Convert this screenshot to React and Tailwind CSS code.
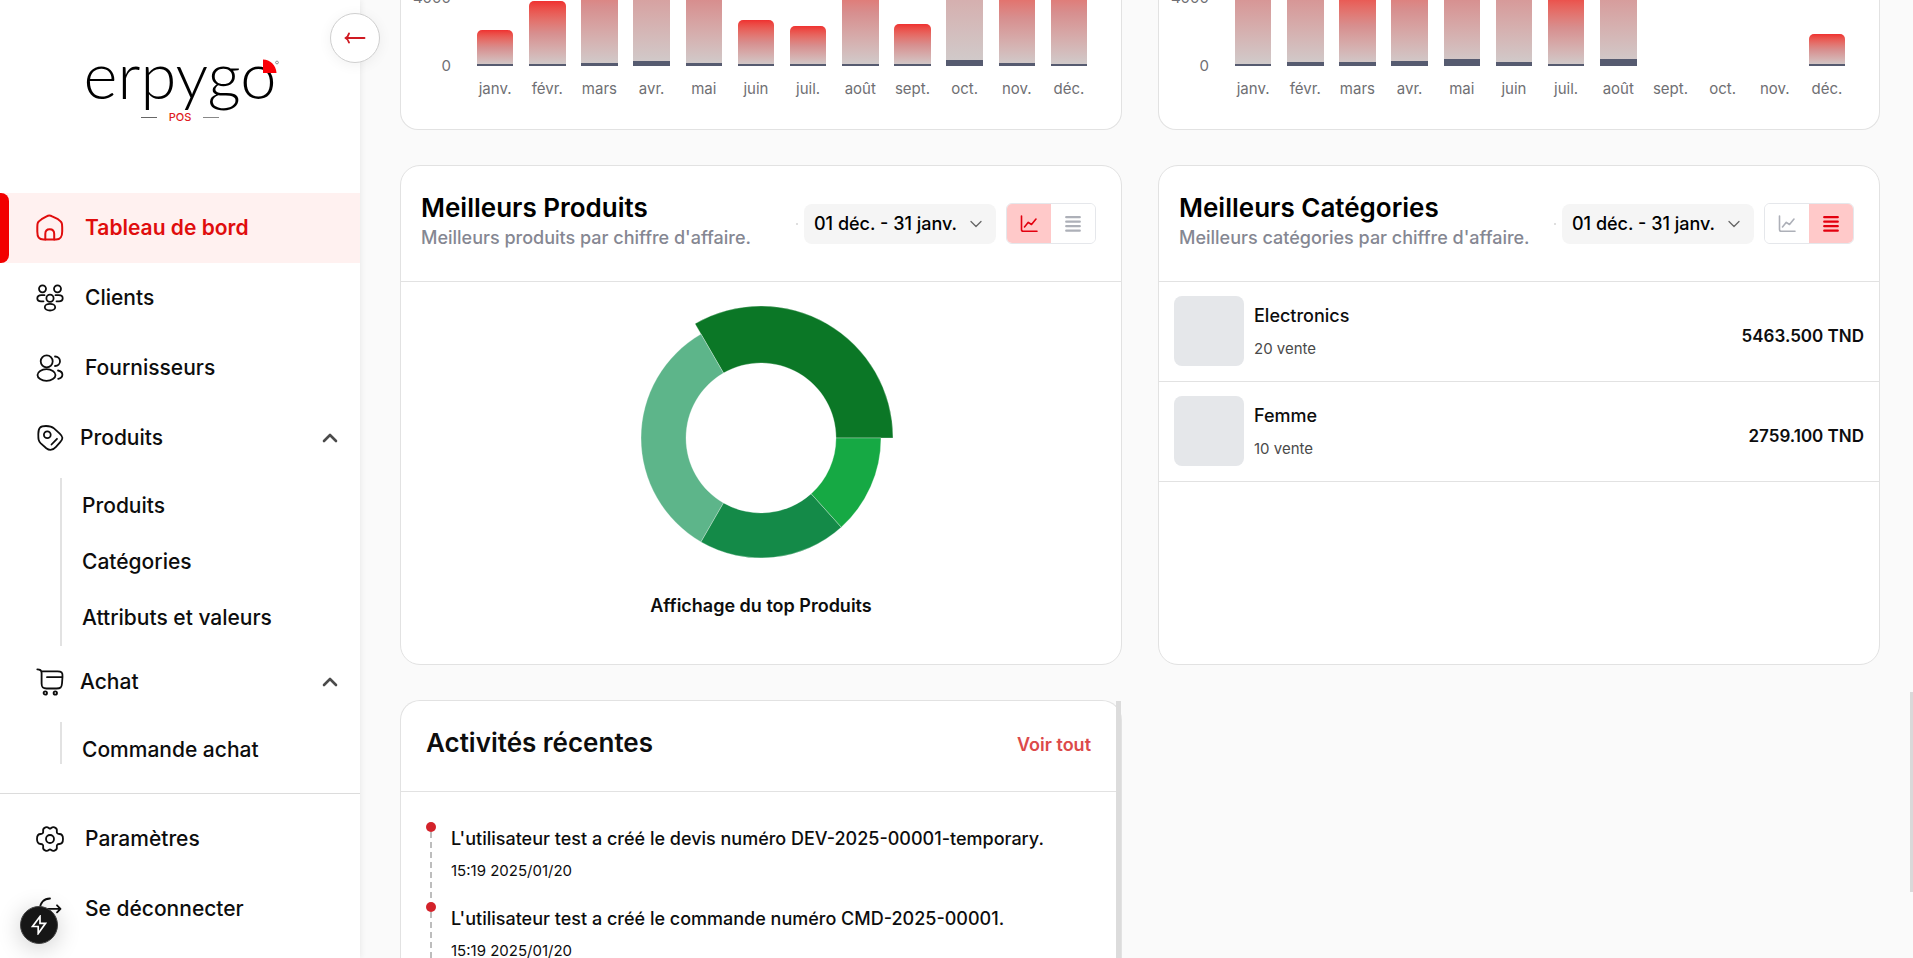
import React from 'react';

const MONTHS = ['janv.', 'févr.', 'mars', 'avr.', 'mai', 'juin', 'juil.', 'août', 'sept.', 'oct.', 'nov.', 'déc.'];

const SALES = [
  [36, 2], [65, 2], [118, 3], [190, 5], [130, 3], [46, 2], [40, 2], [106, 2], [42, 2], [280, 6], [96, 3], [106, 2],
];
const PURCHASES = [
  [150, 2], [150, 4], [80, 4], [112, 5], [135, 7], [160, 4], [76, 2], [170, 7], null, null, null, [32, 2],
];

function Icon({ children, size = 28, stroke = 1.8 }) {
  return (
    <svg
      width={size}
      height={size}
      viewBox="0 0 28 28"
      fill="none"
      stroke="currentColor"
      strokeWidth={stroke}
      strokeLinecap="round"
      strokeLinejoin="round"
      className="shrink-0"
      aria-hidden="true"
    >
      {children}
    </svg>
  );
}

const HomeIcon = () => (
  <Icon stroke={2}>
    <path d="M1.3 13.2C1.3 8.6 1.6 8 5.6 5.200L10.600 2.400C12.500 1.200 14.200 1.200 16.100 2.400L22 5.200C25.700 8 26.200 8.600 26.200 13.200V17.500C26.200 23.400 24.500 25.500 20 25.500H7.500C3 25.500 1.300 23.400 1.300 17.500Z" />
    <path d="M9.300 25.500V20C9.300 17.200 11 15.300 13.700 15.300C16.400 15.300 18.200 17.200 18.200 20V25.500" />
  </Icon>
);
const ClientsIcon = () => (
  <Icon>
    <circle cx="6.500" cy="4.800" r="3.500" />
    <circle cx="21.500" cy="4.800" r="3.500" />
    <circle cx="14" cy="14.200" r="3.600" />
    <ellipse cx="14" cy="23.200" rx="5.200" ry="3.300" />
    <path d="M8.500 11.200H5.200C2.900 11.200 1.300 12.500 1.300 14.300C1.300 16.100 2.900 17.300 5 17.300H7.500" />
    <path d="M19.500 11.200H22.800C25.100 11.200 26.700 12.500 26.700 14.300C26.700 16.100 25.100 17.300 23 17.300H20.500" />
  </Icon>
);
const SuppliersIcon = () => (
  <Icon>
    <circle cx="10.700" cy="7.300" r="6" />
    <ellipse cx="10.500" cy="21" rx="9" ry="5.800" />
    <path d="M19 2.500C22 2.500 24 4.600 24 7.300C24 10 22 12 19 12" />
    <path d="M22 16.500C24.700 17 26.400 18.700 26.400 20.800C26.400 22.900 24.700 24.300 22.200 24.800" />
  </Icon>
);
const TagIcon = () => (
  <Icon>
    <path d="M2.300 10C2.300 3.500 4.300 2 10 2C14 2 15.500 2.200 18 4.400L23.500 9.300C27.200 12.700 27.200 14.800 24.200 18.200L20 22.800C16.700 26.500 14 27.200 10.300 24.200L4.800 19.400C2.300 17 2.300 15 2.300 10Z" />
    <circle cx="11.300" cy="10.700" r="3.400" />
    <path d="M15.500 20.500L21 14.800" />
  </Icon>
);
const CartIcon = () => (
  <Icon>
    <path d="M1.300 1.300C3.800 1.300 5.600 2 5.600 5V15.500C5.600 19.500 7 20.500 10.500 20.500H20.500C24.500 20.500 25.700 19.500 26 15.500L26.500 8.800C26.800 4.500 25.500 3.300 21.500 3.300H5.600" />
    <path d="M11 9.200H26" />
    <circle cx="9.300" cy="25" r="1.700" />
    <circle cx="19.300" cy="25" r="1.700" />
  </Icon>
);
const GearIcon = () => (
  <Icon>
    <circle cx="14" cy="14" r="4" />
    <path d="M14 3.600C15.200 3.600 15.800 1.300 18.500 2.300C21.600 3.500 21 4.700 20.800 6.300C20.700 7.800 21.300 9 23.300 9C26 9 27 11.500 27 14C27 16.500 26 19 23.300 19C21.300 19 20.700 20.200 20.800 21.700C21 23.300 21.600 24.500 18.500 25.700C15.800 26.700 15.200 24.400 14 24.400C12.800 24.400 12.200 26.700 9.500 25.700C6.400 24.500 7 23.300 7.200 21.700C7.300 20.200 6.700 19 4.700 19C2 19 1 16.500 1 14C1 11.500 2 9 4.700 9C6.700 9 7.300 7.800 7.200 6.300C7 4.700 6.400 3.500 9.500 2.300C12.200 1.300 12.800 3.600 14 3.600Z" />
  </Icon>
);
const LogoutIcon = () => (
  <Icon>
    <path d="M14 3.500C8 3.500 4 8 4 13.800C4 19.600 8 24 14 24" />
    <path d="M12 13.800H24.500M21 10.300L24.500 13.800L21 17.300" />
  </Icon>
);

function Chevron({ up }) {
  return (
    <svg width="16" height="10" viewBox="0 0 16 10" fill="none" stroke="#4b4b4b" strokeWidth="2.600" strokeLinecap="round" strokeLinejoin="round" aria-hidden="true">
      <path d={up ? 'M2 8L8 2L14 8' : 'M2 2L8 8L14 2'} />
    </svg>
  );
}

function NavLink({ icon, label, active }) {
  return (
    <a
      href="#"
      aria-current={active ? 'page' : undefined}
      className={
        active
          ? 'flex h-[70px] items-center gap-[21px] bg-[#fff1f0] font-semibold text-[#e00d0d]'
          : 'flex h-[70px] items-center gap-[21px] pl-9'
      }
    >
      {active && <span className="mr-[6px] h-[70px] w-[9px] shrink-0 rounded-r-lg bg-[#f20000]" />}
      {icon}
      <span>{label}</span>
    </a>
  );
}

function NavGroup({ icon, label, items, clipped }) {
  return (
    <div>
      <button type="button" aria-expanded="true" className="flex h-[70px] w-full items-center gap-4 pr-[22px] pl-9 text-left">
        {icon}
        <span className="flex-1">{label}</span>
        <Chevron up />
      </button>
      <ul className={clipped ? 'mt-[5px] ml-[60px] h-[42px] border-l-2 border-[#e2e2e2]' : 'mt-[5px] mb-[1px] ml-[60px] border-l-2 border-[#e2e2e2]'}>
        {items.map((item) => (
          <li key={item}>
            <a href="#" className="flex h-14 items-center pl-5">{item}</a>
          </li>
        ))}
      </ul>
    </div>
  );
}

function Logo() {
  return (
    <div className="flex flex-col items-center pt-[39px]" aria-label="erpygo POS">
      <div className="relative font-['Lato',sans-serif] text-[65px] leading-[70px] font-light text-black">
        erpygo
        <svg className="absolute top-[20px] -right-[3px]" width="17" height="15" viewBox="0 0 17 15" aria-hidden="true">
          <path d="M1 0.500C8 0.500 14 6 14.500 14H1Z" fill="#fb0007" />
          <circle cx="15" cy="3.500" r="1.400" fill="none" stroke="#555" strokeWidth="0.600" />
        </svg>
      </div>
      <div className="flex items-center gap-3 text-[11px] leading-4 text-[#e01b24]">
        <span className="h-px w-4 bg-[#666]" />
        POS
        <span className="h-px w-4 bg-[#888]" />
      </div>
    </div>
  );
}

function Sidebar() {
  return (
    <aside className="relative z-10 flex w-[360px] shrink-0 flex-col bg-white text-[21px] leading-7 font-medium text-[#0d0d0d] shadow-[1px_0_6px_rgba(0,0,0,0.07)]">
      <div className="h-[193px] shrink-0">
        <Logo />
      </div>
      <button
        type="button"
        aria-label="Réduire le menu"
        className="absolute top-[13px] -right-5 flex size-[50px] items-center justify-center rounded-full border border-[#cfcfcf] bg-white text-[#cf1a22] shadow-[0_2px_14px_rgba(0,0,0,0.06)]"
      >
        <svg width="22" height="12" viewBox="0 0 22 12" fill="none" stroke="currentColor" strokeWidth="1.900" strokeLinecap="round" strokeLinejoin="round" aria-hidden="true">
          <path d="M1.500 6H20.500M5 1.500C4.500 3.500 3.500 5 1.500 6C3.500 7 4.500 8.500 5 10.500" />
        </svg>
      </button>
      <nav>
        <NavLink icon={<HomeIcon />} label="Tableau de bord" active />
        <NavLink icon={<ClientsIcon />} label="Clients" />
        <NavLink icon={<SuppliersIcon />} label="Fournisseurs" />
        <NavGroup icon={<TagIcon />} label="Produits" items={['Produits', 'Catégories', 'Attributs et valeurs']} />
        <NavGroup icon={<CartIcon />} label="Achat" items={['Commande achat']} clipped />
      </nav>
      <div className="mt-[29px] border-t border-[#dcdcdc] pt-[10px]">
        <NavLink icon={<GearIcon />} label="Paramètres" />
        <NavLink icon={<LogoutIcon />} label="Se déconnecter" />
      </div>
      <button
        type="button"
        aria-label="Outils"
        className="absolute bottom-[14px] left-5 flex size-[38px] items-center justify-center rounded-full border border-[#444] bg-[#161616] text-white shadow-[0_4px_24px_rgba(0,0,0,0.2)]"
      >
        <svg width="16" height="20" viewBox="0 0 16 20" fill="none" stroke="currentColor" strokeWidth="1.700" strokeLinejoin="miter" aria-hidden="true">
          <path d="M9 1.500L1.500 11.500H7.200V18.500L14.500 8.300H9Z" />
        </svg>
      </button>
    </aside>
  );
}

function BarCard({ data }) {
  return (
    <section className="flex h-[130px] flex-col justify-end overflow-hidden rounded-b-[18px] border border-t-0 border-[#e2e2e2] bg-white pr-[26px] pb-[30px] text-[15px] leading-5 text-[#6f6f73]">
      <div className="flex items-end">
        <div className="-mb-[10px] flex w-[50px] shrink-0 flex-col gap-12 text-right">
          <span>4000</span>
          <span>0</span>
        </div>
        <div className="ml-[18px] flex h-[66px] flex-1 items-end">
          {data.map((bar, i) => (
            <div key={MONTHS[i]} className="flex flex-1 items-end justify-center">
              {bar && (
                <div
                  className="flex w-[70%] flex-col justify-end rounded-t-[5px] bg-linear-to-b from-[#ef3030] via-[#d78f8f] to-[#d0cccc]"
                  style={{ height: bar[0] }}
                >
                  <div className="bg-[#565b70]" style={{ height: bar[1] }} />
                </div>
              )}
            </div>
          ))}
        </div>
      </div>
      <div className="mt-[13px] ml-[68px] flex">
        {MONTHS.map((m) => (
          <span key={m} className="flex-1 text-center">{m}</span>
        ))}
      </div>
    </section>
  );
}

function ViewToggle({ value }) {
  const on = 'flex flex-1 items-center justify-center bg-[#ffc9c9] text-[#e3000f]';
  const off = 'flex flex-1 items-center justify-center bg-white text-[#adb0b8]';
  return (
    <div className="flex h-[41px] w-[90px] shrink-0 overflow-hidden rounded-md border border-[#e5e7eb]">
      <button type="button" aria-label="Graphique" aria-pressed={value === 'chart'} className={value === 'chart' ? on : off}>
        <svg width="18" height="18" viewBox="0 0 18 18" fill="none" stroke="currentColor" strokeWidth="1.600" strokeLinecap="round" strokeLinejoin="round" aria-hidden="true">
          <path d="M1.500 1V14.500C1.500 15.800 2 16.300 3.300 16.300H17M4.500 12L8.300 7.300L11.500 9.500L16 4" />
        </svg>
      </button>
      <button type="button" aria-label="Liste" aria-pressed={value === 'list'} className={value === 'list' ? on : off}>
        <svg width="16" height="18" viewBox="0 0 16 18" stroke="currentColor" strokeWidth="2.200" strokeLinecap="round" aria-hidden="true">
          <path d="M1.200 2.200H14.800M1.200 6.700H14.800M1.200 11.200H14.800M1.200 15.700H14.800" />
        </svg>
      </button>
    </div>
  );
}

function TopCard({ title, subtitle, view, children }) {
  return (
    <section className="flex h-[500px] flex-col rounded-[20px] border border-[#e2e2e2] bg-white">
      <header className="flex h-[116px] shrink-0 items-center border-b border-[#e2e2e2] pr-[25px] pl-5">
        <div className="min-w-0 flex-1 pb-[3px] whitespace-nowrap">
          <h2 className="text-[26px] leading-8 font-semibold text-black">{title}</h2>
          <p className="text-[18px] leading-7 font-medium text-[#858792]">{subtitle}</p>
        </div>
        <span className="mr-[6px] size-0.5 shrink-0 rounded-full bg-[#d4d4d4]" />
        <div className="relative mr-[10px] flex shrink-0 items-center">
          <select aria-label="Période" defaultValue="range" className="h-10 w-[192px] appearance-none rounded-lg bg-[#f5f5f5] pl-[10px] text-[18px] font-medium text-black">
            <option value="range">01 déc. - 31 janv.</option>
          </select>
          <svg className="pointer-events-none absolute right-[14px]" width="12" height="8" viewBox="0 0 12 8" fill="none" stroke="#666" strokeWidth="1.300" strokeLinecap="round" strokeLinejoin="round" aria-hidden="true">
            <path d="M1 1.500L6 6.500L11 1.500" />
          </svg>
        </div>
        <ViewToggle value={view} />
      </header>
      {children}
    </section>
  );
}

const polar = (r, deg) => {
  const a = (deg * Math.PI) / 180;
  return `${(r * Math.cos(a)).toFixed(2)} ${(-r * Math.sin(a)).toFixed(2)}`;
};
const arc = (from, to, outer) =>
  `M${polar(75, from)}L${polar(outer, from)}A${outer} ${outer} 0 0 0 ${polar(outer, to)}L${polar(75, to)}A75 75 0 0 1 ${polar(75, from)}Z`;

function Donut() {
  return (
    <svg width="268" height="268" viewBox="-134 -134 268 268" stroke="#fff" strokeWidth="0.300" role="img" aria-label="Répartition des meilleurs produits">
      <path d={arc(0, 120, 132)} fill="#0b7726" />
      <path d={arc(120, 240, 120)} fill="#5db58a" />
      <path d={arc(240, 312, 120)} fill="#148a48" />
      <path d={arc(312, 360, 120)} fill="#16a944" />
    </svg>
  );
}

const CATEGORIES = [
  { name: 'Electronics', count: '20 vente', total: '5463.500 TND' },
  { name: 'Femme', count: '10 vente', total: '2759.100 TND' },
];

const ACTIVITIES = [
  { text: "L'utilisateur test a créé le devis numéro DEV-2025-00001-temporary.", time: '15:19 2025/01/20' },
  { text: "L'utilisateur test a créé le commande numéro CMD-2025-00001.", time: '15:19 2025/01/20' },
];

function RecentActivity() {
  return (
    <section className="relative flex h-[290px] flex-col rounded-t-[20px] border border-b-0 border-[#e2e2e2] bg-white">
      <header className="flex h-[91px] shrink-0 items-start justify-between border-b border-[#e2e2e2] pt-[26px] pr-[30px] pl-[25px]">
        <h2 className="text-[26px] leading-8 font-semibold text-[#0d0d0d]">Activités récentes</h2>
        <a href="#" className="text-[18px] leading-9 font-semibold text-[#dc4a4a]">Voir tout</a>
      </header>
      <ol className="pt-[30px] pl-[25px] text-[#0d0d0d]">
        {ACTIVITIES.map((a) => (
          <li key={a.text} className="flex h-20 gap-[15px] whitespace-nowrap">
            <span className="flex w-[10px] shrink-0 flex-col items-center">
              <span className="size-[10px] shrink-0 rounded-full bg-[#d3222a]" />
              <span className="w-0.5 flex-1 bg-[repeating-linear-gradient(to_bottom,#bdbdbd_0_6px,transparent_6px_10px)]" />
            </span>
            <span className="block pt-[1px]">
              <span className="block text-[18px] leading-8 font-medium">{a.text}</span>
              <time className="block text-[15px] leading-8">{a.time}</time>
            </span>
          </li>
        ))}
      </ol>
      <span className="absolute inset-y-0 right-0 w-[5px] bg-[#dcdcdc]" />
    </section>
  );
}

export default function App() {
  return (
    <div className="flex h-screen overflow-hidden bg-[#fafafa] font-['Inter',sans-serif]">
      <Sidebar />
      <main className="relative grid min-w-0 flex-1 grid-cols-2 content-start gap-x-9 gap-y-[35px] overflow-hidden pr-[33px] pl-10">
        <BarCard data={SALES} />
        <BarCard data={PURCHASES} />
        <TopCard title="Meilleurs Produits" subtitle="Meilleurs produits par chiffre d'affaire." view="chart">
          <div className="flex flex-col items-center pt-[22px]">
            <Donut />
            <p className="mt-5 text-[18px] leading-7 font-semibold text-[#0d0d0d]">Affichage du top Produits</p>
          </div>
        </TopCard>
        <TopCard title="Meilleurs Catégories" subtitle="Meilleurs catégories par chiffre d'affaire." view="list">
          <ul>
            {CATEGORIES.map((c) => (
              <li key={c.name} className="flex h-[100px] items-start border-b border-[#e2e2e2] px-[15px] pt-[14px]">
                <span className="size-[70px] shrink-0 rounded-lg bg-[#e5e7ea]" />
                <span className="ml-[10px] flex flex-1 flex-col gap-[5px] pt-[6px]">
                  <span className="text-[18px] leading-7 font-medium text-[#0d0d0d]">{c.name}</span>
                  <span className="text-[15px] leading-7 text-[#4a4a4a]">{c.count}</span>
                </span>
                <span className="pt-[26px] text-[17px] leading-7 font-semibold text-[#0d0d0d]">{c.total}</span>
              </li>
            ))}
          </ul>
        </TopCard>
        <RecentActivity />
        <span className="absolute top-[692px] right-0 h-[200px] w-[3px] bg-[#d9d9d9]" />
      </main>
    </div>
  );
}
